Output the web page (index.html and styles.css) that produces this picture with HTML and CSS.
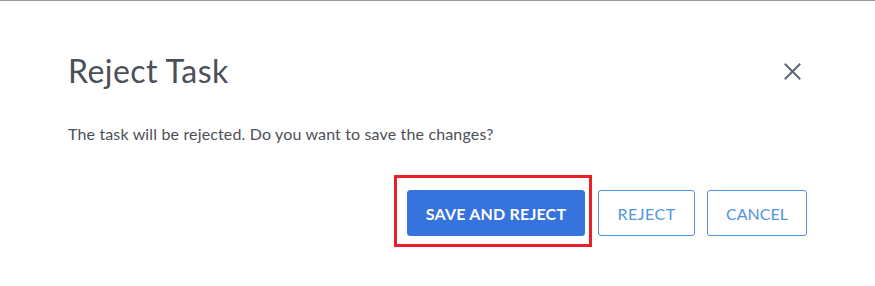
FILE: index.html
```html
<!DOCTYPE html>
<html lang="en">
<head>
<meta charset="utf-8">
<title>Reject Task</title>
<link rel="stylesheet" href="styles.css">
</head>
<body>
<div class="frame">
  <div class="dialog">
    <header class="head">
      <h1 class="title">Reject Task</h1>
      <button class="close" aria-label="Close">
        <svg viewBox="0 0 17 17" width="17" height="17"><path d="M1.5 1.5 L15.5 15.5 M15.5 1.5 L1.5 15.5" stroke="#5e6771" stroke-width="2" fill="none" stroke-linecap="square"/></svg>
      </button>
    </header>
    <p class="msg">The task will be rejected. Do you want to save the changes?</p>
    <div class="actions">
      <button class="btn primary highlighted btn-save">SAVE AND REJECT</button>
      <button class="btn outline btn-reject">REJECT</button>
      <button class="btn outline btn-cancel">CANCEL</button>
    </div>
  </div>
</div>
</body>
</html>
```
FILE: styles.css
```css
html, body {
  margin: 0;
  background: #ffffff;
}
body {
  font-family: "Lato", "Liberation Sans", sans-serif;
  color: #4a4f56;
}
.frame {
  border-top: 1px solid #9a9a9a;
  min-height: 285px;
}
.dialog {
  padding: 51px 68px 0 68px;
}
.head {
  display: flex;
  justify-content: space-between;
  align-items: center;
}
.title {
  margin: 0;
  font-size: 32px;
  line-height: 38px;
  font-weight: 400;
  letter-spacing: 0.45px;
  color: #4a4f58;
}
.close {
  border: 0;
  background: none;
  padding: 0;
  margin-right: 6px;
  width: 17px;
  height: 17px;
  display: flex;
  cursor: pointer;
}
.msg {
  margin: 32px 0 0 0;
  font-size: 16px;
  line-height: 24px;
  letter-spacing: 0.15px;
  color: #4b5057;
}
.actions {
  margin-top: 44px;
  display: flex;
  justify-content: flex-end;
  gap: 12px;
}
.btn {
  box-sizing: border-box;
  height: 46px;
  padding: 0;
  text-align: center;
  border-radius: 3px;
  font-family: inherit;
  font-size: 16px;
  font-weight: 700;
  cursor: pointer;
}
.btn-save { width: 178px; letter-spacing: 0.2px; }
.btn-reject { width: 97px; letter-spacing: 0.5px; }
.btn-cancel { width: 100px; }
.primary {
  background: #3673dc;
  border: 1px solid #3673dc;
  color: #ffffff;
}
.outline {
  background: #ffffff;
  border: 1px solid #4a90e2;
  color: #4f95e2;
  font-weight: 400;
}
.highlighted {
  position: relative;
  margin-right: 1px;
}
.highlighted::after {
  content: "";
  position: absolute;
  top: -16px;
  left: -14px;
  right: -8px;
  bottom: -12px;
  border: 3px solid #e8202a;
  pointer-events: none;
}
```
